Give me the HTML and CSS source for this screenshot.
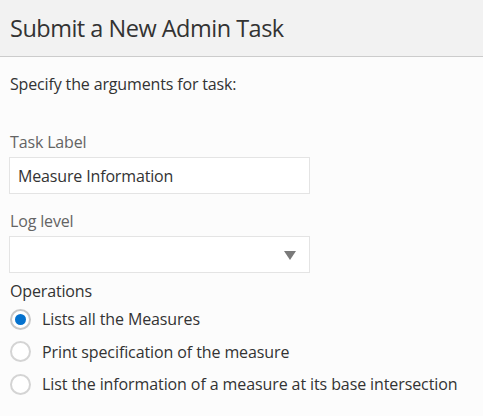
FILE: index.html
```html
<!DOCTYPE html>
<html>
<head>
<meta charset="utf-8">
<link rel="stylesheet" href="styles.css">
</head>
<body>
<div class="dialog">
  <header class="dialog-header">
    <h1 class="dialog-title">Submit a New Admin Task</h1>
  </header>
  <main class="dialog-body">
    <p class="intro">Specify the arguments for task:</p>
    <div class="field">
      <label class="field-label">Task Label</label>
      <div class="input">Measure Information</div>
    </div>
    <div class="field field-last">
      <label class="field-label">Log level</label>
      <div class="input select">
        <span class="select-value"></span>
        <span class="caret"></span>
      </div>
    </div>
    <div class="group">
      <div class="group-label">Operations</div>
      <div class="radio-row">
        <span class="radio checked"></span>
        <span class="radio-text">Lists all the Measures</span>
      </div>
      <div class="radio-row">
        <span class="radio"></span>
        <span class="radio-text">Print specification of the measure</span>
      </div>
      <div class="radio-row">
        <span class="radio"></span>
        <span class="radio-text">List the information of a measure at its base intersection</span>
      </div>
    </div>
  </main>
</div>
</body>
</html>
```
FILE: styles.css
```css
html, body {
  margin: 0;
  padding: 0;
  background: #fcfcfc;
}
body {
  font-family: "Open Sans", "Noto Sans", sans-serif;
  color: #333333;
  width: 483px;
  height: 416px;
  overflow: hidden;
}
.dialog-header {
  background: #f2f2f2;
  height: 56px;
  border-bottom: 1px solid #cccccc;
  display: flex;
  align-items: center;
  padding: 0 10px;
}
.dialog-title {
  margin: 0;
  font-size: 23.5px;
  line-height: 30px;
  font-weight: 400;
  color: #333333;
  letter-spacing: -0.5px;
}
.dialog-body {
  padding: 17px 10px 0 10px;
}
.intro {
  margin: 0 0 38px 0;
  font-size: 16px;
  line-height: 20px;
  letter-spacing: -0.15px;
}
.field {
  display: flex;
  flex-direction: column;
  margin-bottom: 17px;
}
.field-last {
  margin-bottom: 8px;
}
.field-label {
  font-size: 16px;
  line-height: 20px;
  color: #646464;
  margin-bottom: 5px;
  letter-spacing: -0.15px;
}
.input {
  width: 301px;
  height: 37px;
  box-sizing: border-box;
  margin-left: -1px;
  border: 1px solid #e4e4e4;
  background: #ffffff;
  padding: 0 8px;
  display: flex;
  align-items: center;
  font-size: 16px;
  letter-spacing: -0.15px;
  color: #333333;
}
.select {
  justify-content: space-between;
  padding-right: 13px;
}
.caret {
  width: 0;
  height: 0;
  border-left: 6px solid transparent;
  border-right: 6px solid transparent;
  border-top: 9px solid #7a7a7a;
  margin-top: 2px;
}
.group-label {
  font-size: 16px;
  line-height: 20px;
  letter-spacing: -0.15px;
  color: #333333;
  margin-bottom: 2px;
}
.radio-row {
  display: flex;
  align-items: center;
  height: 32.5px;
}
.radio {
  width: 21px;
  height: 21px;
  box-sizing: border-box;
  border: 2px solid #d4d4d4;
  border-radius: 50%;
  background: #ffffff;
  margin-right: 11px;
  display: flex;
  align-items: center;
  justify-content: center;
  flex: none;
}
.radio.checked {
  border-color: #c8c8c8;
}
.radio.checked::after {
  content: "";
  width: 11px;
  height: 11px;
  border-radius: 50%;
  background: #0572ce;
}
.radio-text {
  font-size: 16px;
  letter-spacing: -0.1px;
  color: #333333;
}
```
